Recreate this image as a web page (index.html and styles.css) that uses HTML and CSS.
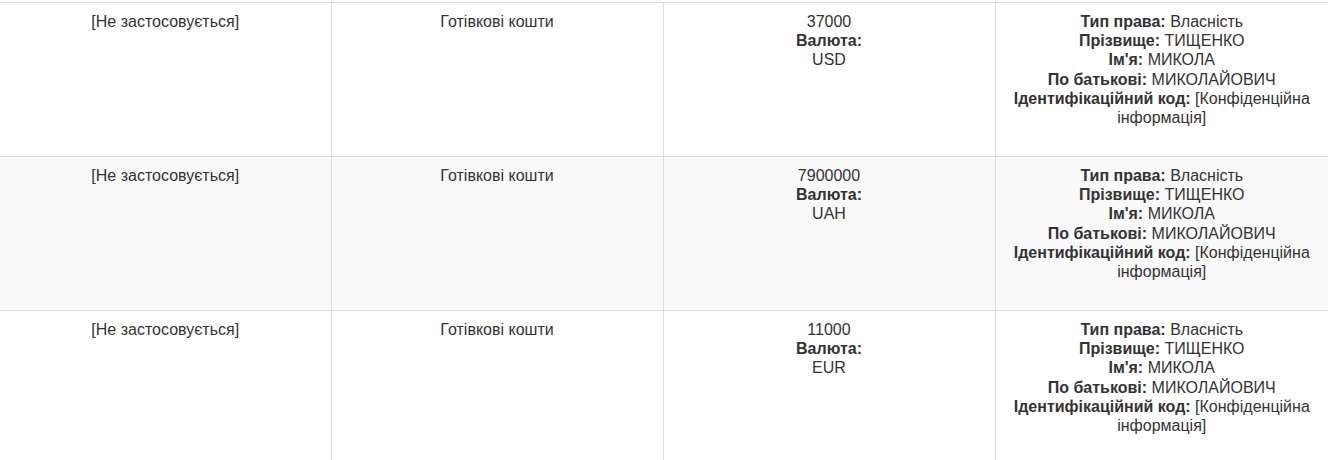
FILE: index.html
```html
<!DOCTYPE html>
<html lang="uk">
<head>
<meta charset="utf-8">
<title>Table</title>
<link rel="stylesheet" href="styles.css">
</head>
<body>
<table class="data">
  <colgroup>
    <col class="c1"><col class="c2"><col class="c3"><col class="c4">
  </colgroup>
  <tbody>
    <tr class="row">
      <td>[Не застосовується]</td>
      <td>Готівкові кошти</td>
      <td>37000<br><b>Валюта:</b><br>USD</td>
      <td><b>Тип права:</b> Власність<br><b>Прізвище:</b> ТИЩЕНКО<br><b>Ім'я:</b> МИКОЛА<br><b>По батькові:</b> МИКОЛАЙОВИЧ<br><b>Ідентифікаційний код:</b> [Конфіденційна інформація]</td>
    </tr>
    <tr class="row alt">
      <td>[Не застосовується]</td>
      <td>Готівкові кошти</td>
      <td>7900000<br><b>Валюта:</b><br>UAH</td>
      <td><b>Тип права:</b> Власність<br><b>Прізвище:</b> ТИЩЕНКО<br><b>Ім'я:</b> МИКОЛА<br><b>По батькові:</b> МИКОЛАЙОВИЧ<br><b>Ідентифікаційний код:</b> [Конфіденційна інформація]</td>
    </tr>
    <tr class="row">
      <td>[Не застосовується]</td>
      <td>Готівкові кошти</td>
      <td>11000<br><b>Валюта:</b><br>EUR</td>
      <td><b>Тип права:</b> Власність<br><b>Прізвище:</b> ТИЩЕНКО<br><b>Ім'я:</b> МИКОЛА<br><b>По батькові:</b> МИКОЛАЙОВИЧ<br><b>Ідентифікаційний код:</b> [Конфіденційна інформація]</td>
    </tr>
  </tbody>
</table>
</body>
</html>
```

FILE: styles.css
```css
html, body {
  margin: 0;
  padding: 0;
  background: #fff;
  overflow: hidden;
}
body {
  font-family: "Liberation Sans", Arial, sans-serif;
  font-size: 16px;
  line-height: 19.2px;
  color: #333;
}
.data {
  margin-top: 2px;
  border-collapse: collapse;
  table-layout: fixed;
  width: 1328px;
}
.c1 { width: 331px; }
.c2 { width: 332px; }
.c3 { width: 332px; }
.c4 { width: 333px; }
.data td {
  border-top: 1px solid #ddd;
  border-left: 1px solid #ddd;
  padding: 9px 8px 8px;
  vertical-align: top;
  text-align: center;
  height: 136px;
}
.data td:first-child {
  border-left: none;
}
.data b {
  font-weight: bold;
}
.alt td {
  background: #f9f9f9;
}
```
